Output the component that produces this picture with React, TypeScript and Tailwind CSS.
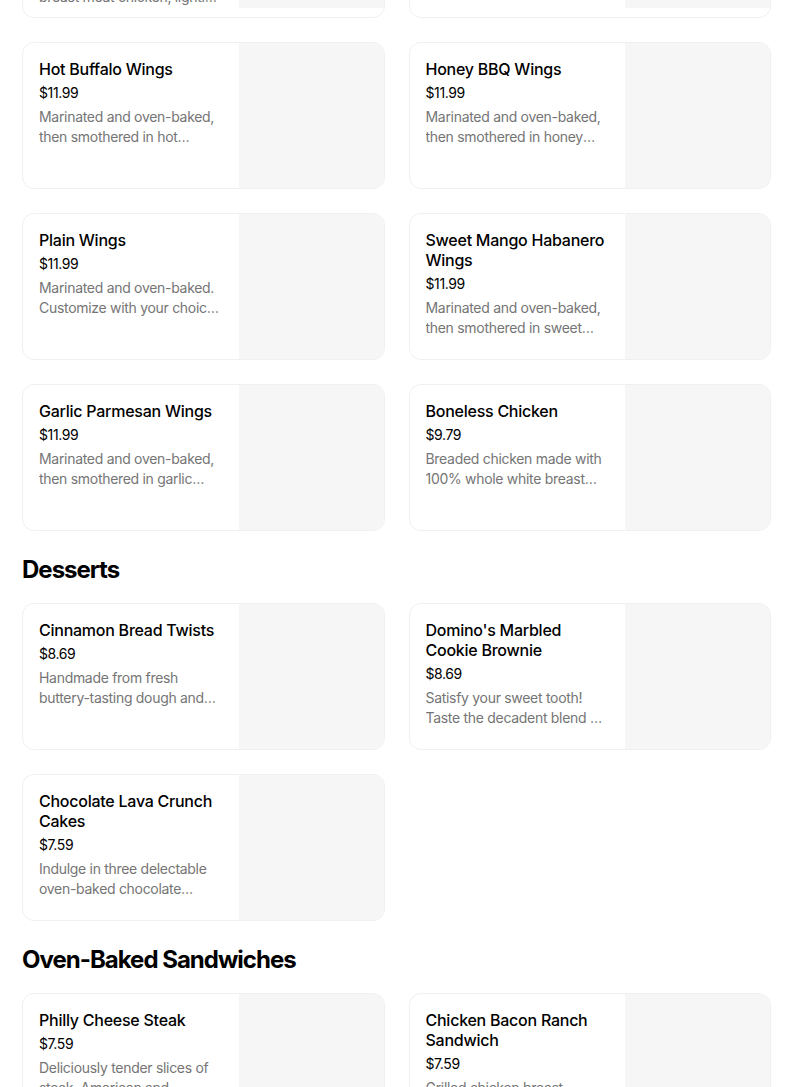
type Item = { name: string; price: string; desc: string };

const topRow: Item[] = [
  {
    name: "Specialty Chicken – Spicy Jalapeno & Pineapple",
    price: "$9.79",
    desc: "Tender bites of 100% white breast meat chicken, lightly breaded, p...",
  },
  {
    name: "Specialty Chicken – Crispy Bacon & Tomato",
    price: "$9.79",
    desc: "Tender bites of 100% white breast meat chicken, lightly breaded.",
  },
];

const wings: Item[] = [
  { name: "Hot Buffalo Wings", price: "$11.99", desc: "Marinated and oven-baked, then smothered in hot buffalo sauce." },
  { name: "Honey BBQ Wings", price: "$11.99", desc: "Marinated and oven-baked, then smothered in honey BBQ sauce." },
  { name: "Plain Wings", price: "$11.99", desc: "Marinated and oven-baked. Customize with your choice of dipping sauce." },
  { name: "Sweet Mango Habanero Wings", price: "$11.99", desc: "Marinated and oven-baked, then smothered in sweet mango habanero sauce." },
  { name: "Garlic Parmesan Wings", price: "$11.99", desc: "Marinated and oven-baked, then smothered in garlic parmesan white sauce." },
  { name: "Boneless Chicken", price: "$9.79", desc: "Breaded chicken made with 100% whole white breast meat." },
];

const desserts: Item[] = [
  { name: "Cinnamon Bread Twists", price: "$8.69", desc: "Handmade from fresh buttery-tasting dough and baked to a golden brown." },
  { name: "Domino's Marbled Cookie Brownie", price: "$8.69", desc: "Satisfy your sweet tooth! Taste the decadent blend of gooey milk chocolate chunk cookie." },
  { name: "Chocolate Lava Crunch Cakes", price: "$7.59", desc: "Indulge in three delectable oven-baked chocolate…" },
];

const sandwiches: Item[] = [
  { name: "Philly Cheese Steak", price: "$7.59", desc: "Deliciously tender slices of steak, American and provolone cheeses, onions." },
  { name: "Chicken Bacon Ranch Sandwich", price: "$7.59", desc: "Grilled chicken breast, smoked bacon, creamy ranch and provolone." },
];

function Card({ item, tight }: { item: Item; tight?: boolean }) {
  return (
    <div className="flex overflow-hidden rounded-xl border border-[#f0f0f0] bg-white">
      <div className={tight ? "min-w-0 flex-1 px-4 pb-[10px] pt-4" : "min-w-0 flex-1 p-4"}>
        <h3 className="text-[16px] font-medium leading-5 tracking-[-0.25px] text-[#000000]">{item.name}</h3>
        <p className="mt-1 text-[14px] leading-5 tracking-[-0.4px] text-[#000000]">{item.price}</p>
        <p className="mt-1 line-clamp-2 text-[14px] leading-5 tracking-[-0.3px] text-[#757575]">{item.desc}</p>
      </div>
      <div className="h-[145px] w-[145px] shrink-0 self-start bg-[#f6f6f6]" />
    </div>
  );
}

function Grid({ items, tight }: { items: Item[]; tight?: boolean }) {
  return (
    <div className="grid grid-cols-2 gap-x-6 gap-y-6">
      {items.map((it) => (
        <Card key={it.name} item={it} tight={tight} />
      ))}
    </div>
  );
}

function Heading({ children }: { children: string }) {
  return (
    <h2 className="mb-[17px] mt-[23px] text-[24px] font-bold leading-8 tracking-[-1px] text-black">{children}</h2>
  );
}

export default function App() {
  return (
    <main className="h-[1087px] overflow-hidden bg-white font-['Inter',sans-serif]">
      <div className="-mt-[138px] ml-[22px] w-[749px]">
        <div className="mb-6">
          <Grid items={topRow} tight />
        </div>
        <Grid items={wings} />
        <Heading>Desserts</Heading>
        <Grid items={desserts} />
        <Heading>Oven-Baked Sandwiches</Heading>
        <Grid items={sandwiches} />
      </div>
    </main>
  );
}
